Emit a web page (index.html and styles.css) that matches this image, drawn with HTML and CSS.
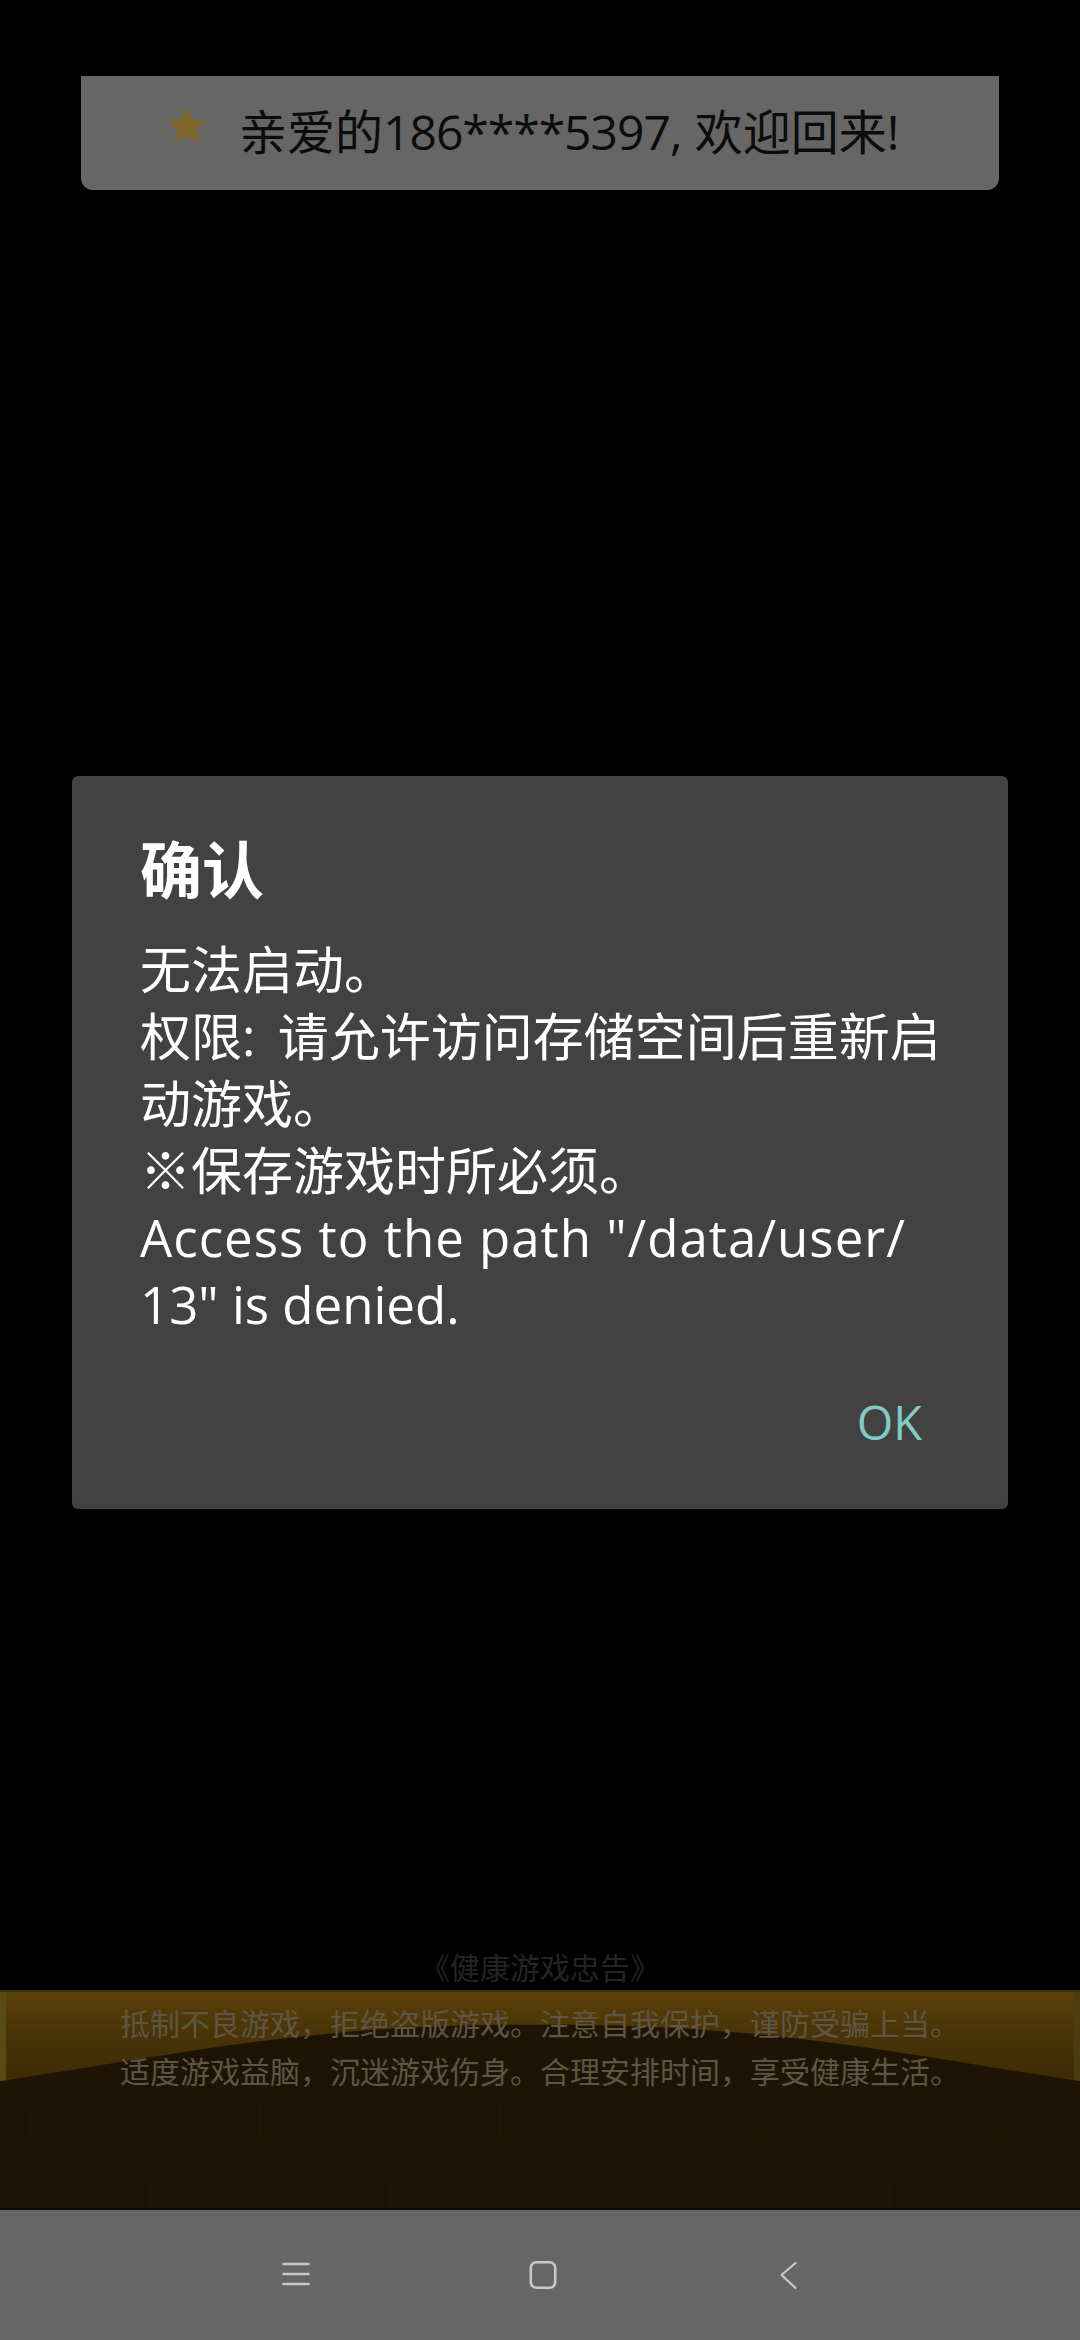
FILE: index.html
```html
<!DOCTYPE html>
<html lang="zh-CN">
<head>
    <meta charset="UTF-8">
    <meta name="viewport" content="width=device-width, initial-scale=1.0">
    <title>确认</title>
    <link rel="stylesheet" href="styles.css">
</head>
<body>

<div class="toast">
    <svg class="star" viewBox="0 0 60 60" width="60" height="60">
        <path d="M30 10 L35.5 24 L50 25 L39 34 L43 47 L30 40 L17 47 L21 34 L10 25 L24.5 24 Z" fill="#7d6527"/>
        <path d="M17 8 L21 14 M43 8 L39 14 M5 37 L12 34 M55 37 L48 34 M30 50 L30 57" stroke="#70664a" stroke-width="2" fill="none"/>
    </svg>
    <span>亲爱的<span class="phone">186****5397</span>, 欢迎回来!</span>
</div>

<div class="dialog">
    <h1 class="dialog-title">确认</h1>
    <p class="dialog-text">无法启动。<br><span class="wide-gap">权限: 请允许访问存储空间后重新启动游戏。</span><br>※保存游戏时所必须。<br><span class="path-line">Access to the path "/data/user/</span><br>13" is denied.</p>
    <div class="dialog-actions">
        <span class="ok">OK</span>
    </div>
</div>

<div class="advice">
    <div class="advice-title">《健康游戏忠告》</div>
    <div class="advice-band">
        <svg class="hill" viewBox="0 0 1080 218" preserveAspectRatio="none">
            <path d="M0 90 C100 75 200 56 300 45 C380 36 460 33 540 33 C620 33 700 36 780 45 C880 56 980 75 1080 90 L1080 218 L0 218 Z" fill="#1d1403"/>
            <path d="M30 150 H1050 M30 150 V115 M260 150 V115 M500 150 V115 M760 150 V115 M1000 150 V115 M150 190 V218 M390 190 V218 M640 190 V218 M890 190 V218" stroke="#211704" stroke-width="2" fill="none"/>
        </svg>
        <p class="advice-text">抵制不良游戏，拒绝盗版游戏。注意自我保护，谨防受骗上当。<br>适度游戏益脑，沉迷游戏伤身。合理安排时间，享受健康生活。</p>
    </div>
</div>

<nav class="navbar">
    <svg class="nav-icon" viewBox="0 0 30 30" width="30" height="30">
        <path d="M2.5 4 H27.5 M2.5 14 H27.5 M2.5 24 H27.5" stroke="#c8c8c8" stroke-width="2.6" stroke-linecap="round" fill="none"/>
    </svg>
    <svg class="nav-icon" viewBox="0 0 30 30" width="30" height="30">
        <rect x="2.8" y="2.3" width="24.4" height="25.4" rx="5.5" stroke="#c8c8c8" stroke-width="2.6" fill="none"/>
    </svg>
    <svg class="nav-icon" viewBox="0 0 30 30" width="30" height="30">
        <path d="M21.5 3 L7.5 15 L21.5 28" stroke="#c8c8c8" stroke-width="2.2" stroke-linecap="round" stroke-linejoin="round" fill="none"/>
    </svg>
</nav>

</body>
</html>
```

FILE: styles.css
```css
/* Estilos basicos */
body {
    font-family: 'Open Sans', 'Noto Sans CJK SC', sans-serif;
    background-color: #000;
    margin: 0;
    height: 2340px;
    display: flex;
    flex-direction: column;
    overflow: hidden;
}
.toast {
    margin: 76px 81px 0;
    height: 114px;
    background-color: #666;
    border-radius: 0 0 12px 12px;
    display: flex;
    align-items: center;
    padding: 0 0 8px 76px;
    box-sizing: border-box;
    gap: 22px;
    color: #0c0c0c;
    font-size: 48px;
}
.star {
    flex-shrink: 0;
    margin-bottom: 6px;
}
.phone {
    letter-spacing: -1px;
}
.dialog {
    margin: 586px 72px 0;
    height: 733px;
    box-sizing: border-box;
    background-color: #424242;
    border-radius: 6px;
    padding: 52px 56px 0 68px;
    color: #fff;
    display: flex;
    flex-direction: column;
}
.dialog-title {
    margin: 0;
    font-size: 62px;
    font-weight: 700;
    line-height: 84px;
}
.dialog-text {
    margin: 24px 0 0;
    font-size: 51px;
    line-height: 67px;
}
.wide-gap {
    word-spacing: 9px;
}
.path-line {
    letter-spacing: 1px;
}
.dialog-actions {
    margin-top: 54px;
    display: flex;
    justify-content: flex-end;
    padding-right: 30px;
}
.ok {
    color: #80cbc4;
    font-size: 47px;
    line-height: 60px;
    font-weight: 500;
}
.advice {
    margin-top: auto;
}
.advice-title {
    text-align: center;
    color: #242424;
    font-size: 30px;
    line-height: 44px;
}
.advice-band {
    position: relative;
    height: 220px;
    box-sizing: border-box;
    background: linear-gradient(#5a4008 0, #4a3407 40px, #3a2906 100px);
    box-shadow: inset 6px 0 0 #5a4a14, inset -6px 0 0 #4d3c10;
    border-top: 2px solid #3e3208;
    border-bottom: 2px solid #0e0c06;
    overflow: hidden;
}
.hill {
    position: absolute;
    left: 0;
    top: 0;
    width: 100%;
    height: 100%;
}
.advice-text {
    position: relative;
    margin: 0;
    padding-top: 8px;
    text-align: center;
    color: #5e5644;
    font-size: 30px;
    line-height: 48px;
}
.navbar {
    height: 130px;
    box-sizing: border-box;
    background-color: #666;
    border-top: 1px solid #5d6670;
    display: flex;
    align-items: center;
    padding: 0 276px 2px 281px;
    justify-content: space-between;
}
```
